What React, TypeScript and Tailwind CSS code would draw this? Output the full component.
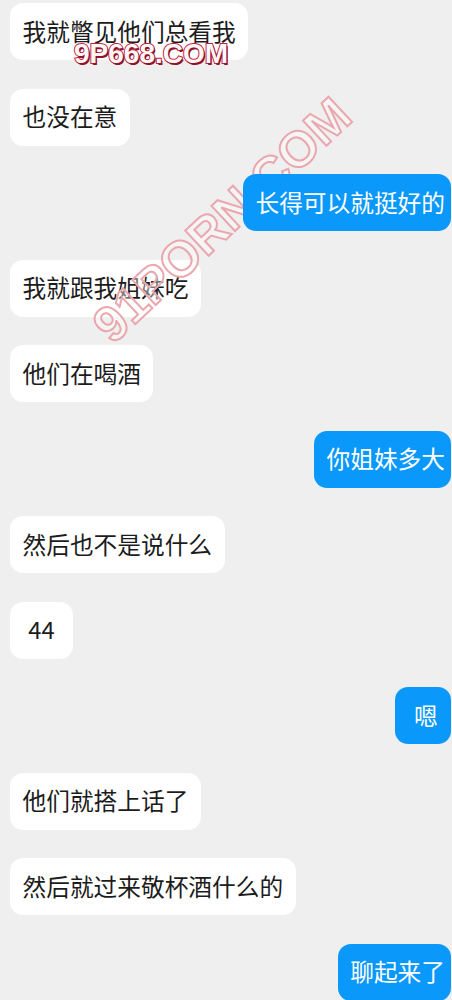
import React from "react";

type Msg = { text: string; mine?: boolean; box?: string };

const messages: Msg[] = [
  { text: "我就瞥见他们总看我" },
  { text: "也没在意" },
  { text: "长得可以就挺好的", mine: true },
  { text: "我就跟我姐妹吃" },
  { text: "他们在喝酒" },
  { text: "你姐妹多大", mine: true },
  { text: "然后也不是说什么" },
  { text: "44", box: "w-[63px] justify-center px-0" },
  { text: "嗯", mine: true, box: "w-[56px] pl-[19px] pr-0" },
  { text: "他们就搭上话了" },
  { text: "然后就过来敬杯酒什么的" },
  { text: "聊起来了", mine: true },
];

function Bubble({ text, mine, box }: Msg) {
  const base =
    "h-[57px] flex items-center rounded-[13px] text-[23.7px] leading-none whitespace-nowrap";
  const tone = mine
    ? "relative z-10 bg-[#0a98fb] text-white pl-[12.5px] pr-[6px]"
    : "bg-white text-[#1c1c1c] px-[12.5px]";
  return (
    <div className={mine ? "flex justify-end pr-[1px]" : "flex justify-start pl-[10px]"}>
      <div className={`${base} ${tone} ${box ?? ""}`}>{text}</div>
    </div>
  );
}

export default function App() {
  return (
    <div className="relative w-[452px] h-[1000px] overflow-hidden bg-[#efefef] font-['Noto_Sans_CJK_SC','Noto_Sans',sans-serif]">
      {/* watermark behind the blue bubbles */}
      <div className="absolute left-[222px] top-[220px] -translate-x-1/2 -translate-y-1/2 -rotate-[43deg] font-['Liberation_Sans',sans-serif] font-bold text-[50px] leading-none text-white/40 [-webkit-text-stroke:2px_#eaa8ae] whitespace-nowrap pointer-events-none z-[5]">
        91PORN.COM
      </div>

      <div className="flex flex-col gap-[28.5px] pt-[3px]">
        {messages.map((m, i) => (
          <Bubble key={i} {...m} />
        ))}
      </div>

      <div className="absolute left-[74px] top-[40px] font-['Liberation_Sans',sans-serif] font-bold text-[28px] leading-none text-[#fff6f7] [-webkit-text-stroke:2px_#c42242] [paint-order:stroke_fill] [text-shadow:1.5px_1.5px_0_#8e1428] whitespace-nowrap pointer-events-none z-20">
        9P668.COM
      </div>
    </div>
  );
}
